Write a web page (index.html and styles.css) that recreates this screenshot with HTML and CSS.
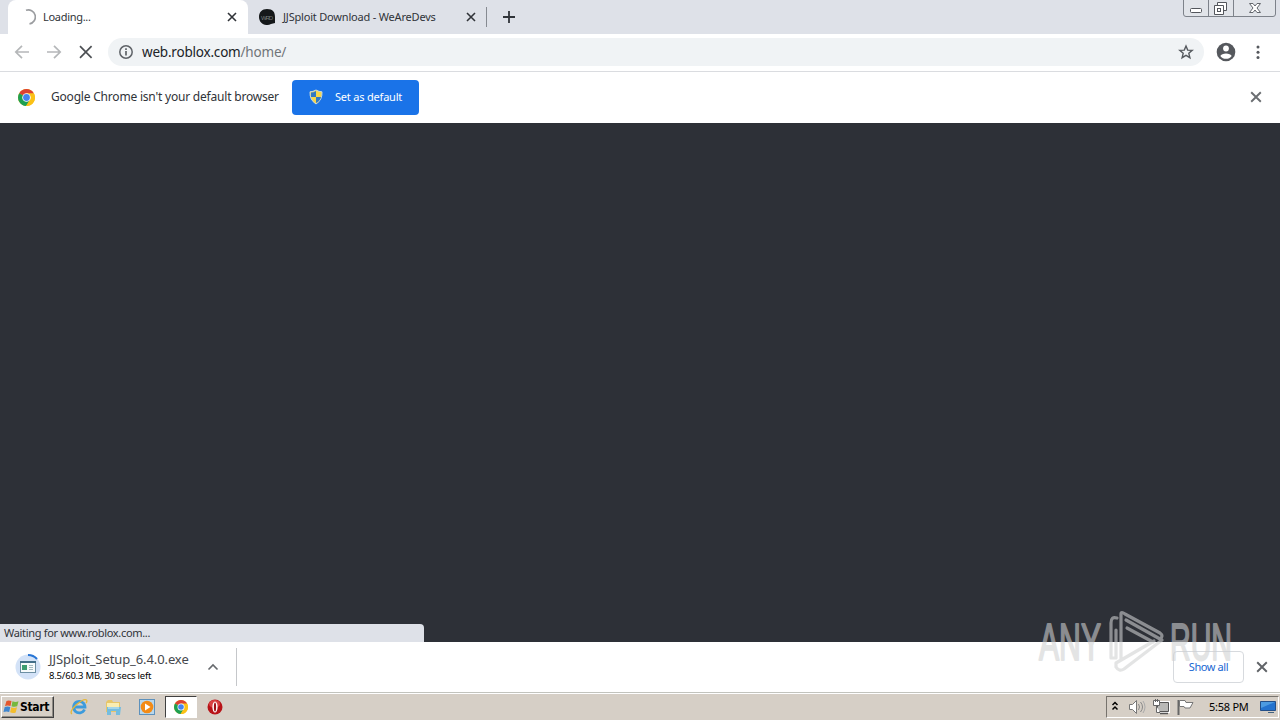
FILE: index.html
```html
<!DOCTYPE html>
<html lang="en">
<head>
<meta charset="utf-8">
<title>Loading...</title>
<link rel="stylesheet" href="styles.css">
</head>
<body>
<svg width="0" height="0" class="defs">
  <symbol id="chrome" viewBox="0 0 16 16">
    <circle cx="8" cy="8" r="8" fill="#fbc116"/>
    <path d="M8 8L1.1 4A8 8 0 0 1 14.9 4z" fill="#dd4132"/>
    <path d="M8 8L1.1 4A8 8 0 0 0 7.6 16L11.3 9.8z" fill="#1ea052"/>
    <path d="M8 4H14.9A8 8 0 0 1 7.6 16L11.5 10z" fill="#fbc116"/>
    <circle cx="8" cy="8" r="4" fill="#fff"/>
    <circle cx="8" cy="8" r="3.2" fill="#4583ee"/>
  </symbol>
  <symbol id="cross" viewBox="0 0 10 10"><path d="M1 1L9 9M9 1L1 9" fill="none" stroke="currentColor" stroke-width="1.6"/></symbol>
</svg>
<div class="screen">
  <header class="tabstrip">
    <div class="tab active">
      <svg class="spinner" width="16" height="16" viewBox="0 0 16 16"><path d="M6 1.300A7 7 0 1 1 9.500 14.800" fill="none" stroke="#9b9da0" stroke-width="1.700"/></svg>
      <span class="tab-title t-loading">Loading...</span>
      <svg class="tab-close" width="10" height="10"><use href="#cross"/></svg>
    </div>
    <div class="tab">
      <svg class="favicon" width="16" height="16" viewBox="0 0 16 16"><path d="M8 0C14 0 16 3 16 8V14L12 15C6 18 0 14 0 8C0 3 3 0 8 0z" fill="#15181a"/><text x="2" y="10.5" font-family="Liberation Sans" font-size="6" fill="#777b7b" textLength="12">WRD</text></svg>
      <span class="tab-title t-jj">JJSploit Download - WeAreDevs</span>
      <svg class="tab-close" width="10" height="10"><use href="#cross"/></svg>
    </div>
    <div class="tab-sep"></div>
    <svg class="plus" width="12" height="12" viewBox="0 0 12 12"><path d="M6 0V12M0 6H12" stroke="#303439" stroke-width="1.8"/></svg>
    <svg class="winbtns" width="94" height="17" viewBox="0 0 94 17">
      <path d="M.5 0V14Q.5 16.500 3 16.500H90Q92.500 16.500 92.500 14V0M25.500 0V16M50.500 0V16" fill="#e1e4e9" stroke="#7d828a"/>
      <rect x="7.500" y="8.500" width="11" height="4" rx="1" fill="#fff" stroke="#53565c"/>
      <path d="M34.500 2.500H43.500V10.500H34.500z" fill="#fff" stroke="#53565c"/><path d="M31.500 5.500H40.500V14.500H31.500z" fill="#fff" stroke="#53565c"/><rect x="34.500" y="8.500" width="3" height="3" fill="#fff" stroke="#53565c"/>
      <path d="M66.500 3.500H70L72 6L74 3.500H77.500L74 8L77.500 12.500H74L72 10L70 12.500H66.500L70 8z" fill="#fff" stroke="#63676d"/>
    </svg>
  </header>
  <nav class="toolbar">
    <svg class="nav-icons" width="80" height="16" viewBox="0 0 80 16" fill="none" stroke-width="1.700"><path d="M15 8H2M8 1.800L1.800 8L8 14.200M33 8H46M40 1.800L46.200 8L40 14.200" stroke="#b5b7b9"/><path d="M66 2.200L77.600 13.800M77.600 2.200L66 13.800" stroke="#4d5054"/></svg>
    <div class="omnibox">
      <svg class="info" width="14" height="14" viewBox="0 0 14 14"><circle cx="7" cy="7" r="6.200" fill="none" stroke="#5f6368" stroke-width="1.500"/><path d="M7 6V10.500M7 3.300V4.900" stroke="#5f6368" stroke-width="1.700"/></svg>
      <span class="url">web.roblox.com<span class="path">/home/</span></span>
      <svg class="star" width="16" height="16" viewBox="0 0 16 16"><path d="M8 2L9.700 6.100L14.200 6.400L10.800 9.300L11.900 13.700L8 11.300L4.100 13.700L5.200 9.300L1.800 6.400L6.300 6.100z" fill="none" stroke="#55595e" stroke-width="1.400"/></svg>
    </div>
    <svg class="avatar" width="20" height="20" viewBox="0 0 20 20"><circle cx="10" cy="10" r="9.300" fill="#55585d"/><circle cx="10" cy="6.500" r="2.900" fill="#fff"/><path d="M4.300 14C5.500 10.500 14.500 10.500 15.700 14C13 17.800 7 17.800 4.300 14z" fill="#fff"/></svg>
    <svg class="dots" width="4" height="16" viewBox="0 0 4 16" fill="#55585d"><circle cx="2" cy="3" r="1.500"/><circle cx="2" cy="8.200" r="1.500"/><circle cx="2" cy="13.400" r="1.500"/></svg>
  </nav>
  <section class="infobar">
    <svg class="logo" width="17" height="17"><use href="#chrome"/></svg>
    <span class="info-text">Google Chrome isn't your default browser</span>
    <button class="set-default">
      <svg width="14" height="16" viewBox="0 0 14 16"><path d="M7 1Q10 2.800 13 2.800Q13.500 11 7 15Q.5 11 1 2.800Q4 2.800 7 1z" fill="#f7d74b" stroke="#c8d8df"/><path d="M7 2Q4.500 3.500 2 3.500V8H7zM7 8H12Q11 12 7 14z" fill="#3179c5"/></svg>
      <span class="set-text">Set as default</span>
    </button>
    <svg class="info-close" width="12" height="12"><use href="#cross"/></svg>
  </section>
  <main class="page">
    <div class="status"><span class="status-text">Waiting for www.roblox.com...</span></div>
  </main>
  <section class="shelf">
    <svg class="file-icon" width="26" height="26" viewBox="0 0 26 26"><circle cx="13" cy="13" r="12.500" fill="#d3e2f7"/><path d="M13 1A12 12 0 0 1 22 5" fill="none" stroke="#2775d5" stroke-width="2"/><rect x="5.500" y="7.500" width="15" height="11" fill="#f6fafb" stroke="#6d8fa3"/><path d="M5 8H21" stroke="#426e88" stroke-width="2"/><rect x="7" y="11" width="5" height="5" fill="#3d9c71"/><path d="M14 11.500H18M14 13.500H18M14 15.500H18" stroke="#a4b9c0"/></svg>
    <div class="file"><span class="file-name">JJSploit_Setup_6.4.0.exe</span><span class="file-info">8.5/60.3 MB, 30 secs left</span></div>
    <svg class="chevron" width="12" height="8" viewBox="0 0 12 8"><path d="M1.500 6.500L6 2L10.500 6.500" fill="none" stroke="#66696d" stroke-width="1.600"/></svg>
    <div class="shelf-sep"></div>
    <button class="show-all"><span class="show-text">Show all</span></button>
    <svg class="shelf-close" width="12" height="12"><use href="#cross"/></svg>
  </section>
  <footer class="taskbar">
    <div class="start">
      <svg width="17" height="16" viewBox="0 0 16 16"><path d="M3 2Q5 .8 8 2L7 7Q4 6 1.500 7z" fill="#e4572d"/><path d="M9 2.300Q12 3.600 15 2.300L13.700 7.300Q11 8.300 8 7.200z" fill="#76b83f"/><path d="M1.200 8Q4 7 6.800 8L5.700 13Q3 12 0 13z" fill="#3f86cf"/><path d="M7.800 8.200Q10.500 9.500 13.500 8.300L12.200 13.500Q9.500 14.700 6.600 13.300z" fill="#f3bd2d"/></svg>
      <span class="start-text">Start</span>
    </div>
    <div class="task ie"><svg width="18" height="18" viewBox="0 0 18 18"><path d="M14.500 11.500A5.700 5.700 0 1 1 15 9H5" fill="none" stroke="#3c9bdc" stroke-width="2.800"/><path d="M2 16Q-1 14 6 7Q14 0 16.500 2Q17.500 3 16 5" fill="none" stroke="#e5b737" stroke-width="1.300"/></svg></div>
    <div class="task"><svg width="18" height="18" viewBox="0 0 18 18"><path d="M2 4L4 2H8L9 4H16V14H2z" fill="#e7c66a"/><path d="M3 5H15V9H3z" fill="#f9edb2"/><path d="M3 9H17L16 17H12V13H7V17H3z" fill="#75bddf"/><path d="M4 10H15" stroke="#d4edf3"/></svg></div>
    <div class="task"><svg width="18" height="18" viewBox="0 0 18 18"><rect x="1.500" y="1.500" width="15" height="15" fill="#b8d7ec" stroke="#5d91bc"/><circle cx="9" cy="9" r="6.300" fill="#f38b16"/><path d="M7 5.500L12.500 9L7 12.500z" fill="#fff"/></svg></div>
    <div class="task current"><svg width="14" height="14"><use href="#chrome"/></svg></div>
    <div class="task"><svg width="16" height="16" viewBox="0 0 16 16"><circle cx="8" cy="8" r="7.500" fill="#b81318"/><ellipse cx="7.500" cy="5" rx="5.500" ry="4" fill="#d94243"/><ellipse cx="8" cy="8" rx="2.600" ry="5.600" fill="#fff"/><ellipse cx="8" cy="8" rx="1.100" ry="4.600" fill="#9d1015"/></svg></div>
    <div class="tray">
      <svg class="tray-icons" width="90" height="18" viewBox="0 0 90 18">
        <path d="M5.500 7L8 4.500L10.500 7M5.500 11.500L8 9L10.500 11.500" fill="none" stroke="#000" stroke-width="1.500"/>
        <path d="M22.500 6.500H25.500L29.500 2.500V15.500L25.500 11.500H22.500z" fill="#fff" stroke="#777"/><path d="M31.500 6Q33.500 9 31.500 12M33.500 4Q37.500 9 33.500 14" fill="none" stroke="#888"/><path d="M36 3Q40 9 36 15" fill="none" stroke="#aaa"/>
        <path d="M50.500 4.500H61.500V13.500H50.500z" fill="#b9b9b7" stroke="#fff" stroke-width="3"/><path d="M50.500 4.500H61.500V13.500H50.500z" fill="#b9b9b7" stroke="#555"/><path d="M53 15.500H61" stroke="#555" stroke-width="1.500"/><path d="M46.500 2.500H52.500V7.500H46.500zM48.500 1V4M50.500 1V4M49.500 8V14.500H53" fill="#fff" stroke="#666"/>
        <path d="M71.500 2V17" stroke="#666" stroke-width="2"/><path d="M72.500 2.500H78L79 4.500H86L83 10H78L77 8.500H72.500z" fill="#fff" stroke="#777"/>
      </svg>
      <span class="clock">5:58 PM</span>
      <svg class="desktop" width="16" height="14" viewBox="0 0 16 14"><path d="M.5 1.500H15.500V10.500H.5z" fill="#2473ce" stroke="#234f88"/><path d="M1 2H15L1 8z" fill="#4c9be1"/><path d="M8 12.500H14" stroke="#43627f"/></svg>
    </div>
  </footer>
  <svg class="watermark" width="204" height="72" viewBox="0 0 204 72">
    <g class="mark-text"><text x="3" y="54" textLength="62" lengthAdjust="spacingAndGlyphs">ANY</text><text x="134" y="54" textLength="62" lengthAdjust="spacingAndGlyphs">RUN</text></g>
    <path class="mark-arrow" d="M81 12Q75 10 75 17V52H80V24M85 54V8Q85 5 89 8L124 27Q128 30 124 33L90 14M91 22L117 36M126 34L88 63Q83 66 80 61V57L118 35"/>
  </svg>
</div>
</body>
</html>
```
FILE: styles.css
```css
* { box-sizing: border-box; }
body { margin: 0; overflow: hidden; font-family: "Noto Sans", "DejaVu Sans", sans-serif; color: #303338; }
svg { display: block; flex: none; }
span { white-space: nowrap; }
button { font-family: inherit; padding: 0; }
.defs { position: absolute; }
.screen { position: relative; width: 1280px; height: 720px; display: flex; flex-direction: column; background: #fff; }
.tabstrip { height: 34px; display: flex; background: #dee1e8; padding-left: 8px; align-items: center; }
.tab { width: 240px; height: 34px; display: flex; align-items: center; padding: 0 11px; }
.tab.active { background: #fff; border-radius: 8px 8px 0 0; padding-left: 12px; }
.tab-title { margin-left: 8px; font-size: 11px; line-height: 16px; }
.t-loading { margin-left: 7px; letter-spacing: -.3px; }
.t-jj { letter-spacing: -.19px; }
.tab-close { margin-left: auto; }
.tab:not(.active) { padding-right: 10px; width: 238px; }
.tab-sep { width: 1px; height: 20px; background: #868a91; }
.plus { margin-left: 16px; }
.winbtns { margin: 0 3px 0 auto; align-self: flex-start; }
.toolbar { height: 38px; display: flex; align-items: center; border-bottom: 1px solid #dadce0; padding: 0 0 1px 14px; }
.omnibox { width: 1096px; height: 28px; margin-left: 14px; background: #f0f3f5; border-radius: 14px; display: flex; align-items: center; padding: 0 10px 0 11px; }
.url { margin-left: 9px; font-size: 13.5px; letter-spacing: -.2px; color: #202327; }
.path { color: #717579; }
.star { margin-left: auto; }
.avatar { margin-left: 12px; }
.dots { margin-left: 20px; }
.infobar { height: 51px; display: flex; align-items: center; padding: 0 0 1px 18px; }
.info-text { width: 228px; margin: -1px 0 0 16px; font-size: 12px; letter-spacing: -.2px; }
.set-default { margin: 1px 0 0 13px; width: 127px; height: 35px; border: 0; border-radius: 4px; background: #1a73e8; color: #fff; display: flex; align-items: center; padding: 0 0 1px 17px; }
.set-text { margin: -2px 0 0 12px; font-size: 11px; letter-spacing: -.2px; }
.info-close { margin: 0 18px 0 auto; color: #6b6e72; }
.page { height: 519px; background: #2d3037; display: flex; align-items: flex-end; }
.status { width: 424px; height: 18px; background: #dee1e8; border-radius: 0 4px 0 0; padding-left: 4px; font-size: 11px; line-height: 18px; letter-spacing: -.32px; }
.shelf { height: 50px; display: flex; align-items: center; padding-left: 15px; }
.file { width: 140px; display: flex; flex-direction: column; margin-left: 8px; }
.file-name { font-size: 13px; line-height: 16px; color: #45484d; letter-spacing: -.1px; }
.file-info { font-size: 9.5px; line-height: 17px; color: #000; letter-spacing: -.2px; }
.chevron { margin-left: 18px; }
.shelf-sep { width: 1px; height: 38px; margin-left: 17px; background: #c5c7ca; }
.show-all { width: 71px; height: 32px; margin-left: auto; border: 1px solid #d7dade; border-radius: 4px; background: #fff; color: #1967d2; font-size: 11px; padding-bottom: 2px; }
.show-text { letter-spacing: -.4px; }
.shelf-close { margin: 0 12px 0 12px; color: #606367; }
.taskbar { height: 28px; display: flex; align-items: center; background: #d6cfc6; border-top: 1px solid #c2c3bd; box-shadow: inset 0 1px #fff; padding: 2px 1px 1px; }
.start { width: 53px; height: 22px; display: flex; align-items: center; border: 1px solid; border-color: #fff #404040 #404040 #fff; box-shadow: inset -1px -1px #8f8b84; padding-left: 1px; color: #000; }
.start-text { font: bold 12px "DejaVu Sans Condensed", sans-serif; margin-left: 0; letter-spacing: -.35px; }
.task { width: 34px; height: 22px; display: flex; align-items: center; justify-content: center; }
.ie { margin-left: 8px; }
.task.current { width: 32px; margin: 0 1px; background: #fff; border: 1px solid; border-color: #404040 #fff #fff #404040; }
.tray { width: 173px; height: 22px; margin-left: auto; display: flex; align-items: center; border: 1px solid; border-color: #77736d #fff #fff #77736d; }
.clock { margin: -1px 0 0 12px; font-size: 11px; width: 40px; color: #000; letter-spacing: -.25px; }
.desktop { margin-left: 11px; }
.watermark { position: absolute; left: 1036px; top: 606px; opacity: .58; }
.mark-text { font: 52px "Liberation Sans", sans-serif; fill: #d0d1d2; stroke: #d0d1d2; stroke-width: 2; stroke-linejoin: round; }
.mark-arrow { fill: none; stroke: #d0d1d2; stroke-width: 3.2; stroke-linejoin: round; stroke-linecap: round; }
```
